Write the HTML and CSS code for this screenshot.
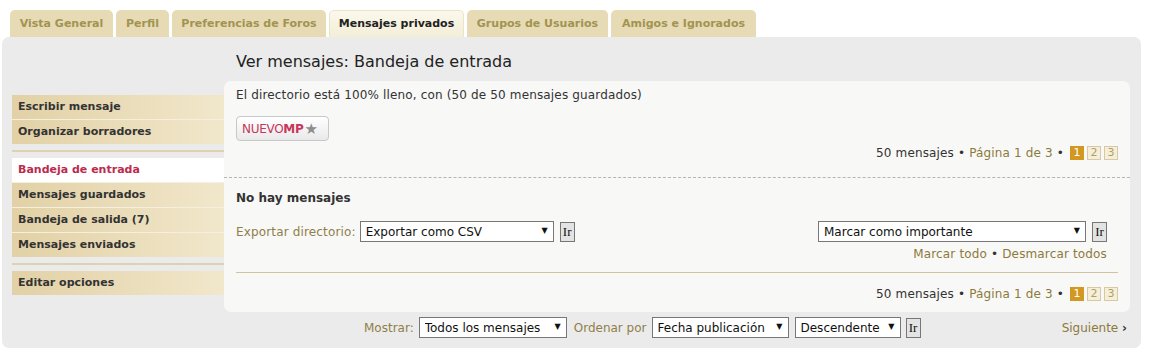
FILE: index.html
```html
<!DOCTYPE html>
<html>
<head lang="es">
    <meta charset="UTF-8">
    <title>Panel de Control de Usuario - Mensajes privados</title>
    <link rel="stylesheet" href="styles.css">
</head>
<body>
    <ul class="tabs">
        <li><a href="#">Vista General</a></li>
        <li><a href="#">Perfil</a></li>
        <li><a href="#">Preferencias de Foros</a></li>
        <li class="active"><a href="#">Mensajes privados</a></li>
        <li><a href="#">Grupos de Usuarios</a></li>
        <li><a href="#">Amigos e Ignorados</a></li>
    </ul>
    <div class="panel">
        <div class="menu">
            <ul>
                <li><a href="#">Escribir mensaje</a></li>
                <li><a href="#">Organizar borradores</a></li>
            </ul>
            <hr>
            <ul>
                <li class="current"><a href="#">Bandeja de entrada</a></li>
                <li><a href="#">Mensajes guardados</a></li>
                <li><a href="#">Bandeja de salida (7)</a></li>
                <li><a href="#">Mensajes enviados</a></li>
            </ul>
            <hr>
            <ul>
                <li><a href="#">Editar opciones</a></li>
            </ul>
        </div>
        <div class="main">
            <h2>Ver mensajes: Bandeja de entrada</h2>
            <div class="inner">
                <p class="full">El directorio está 100% lleno, con (50 de 50 mensajes guardados)</p>
                <div class="newpm"><a href="#" class="btn-pm">NUEVO<b>MP</b><span class="star">&#9733;</span></a></div>
                <div class="pagination">50 mensajes &bull; <a href="#">Página <strong>1</strong> de <strong>3</strong></a> &bull; <span class="pages"><span class="cur">1</span><a href="#">2</a><a href="#">3</a></span></div>
                <hr class="dashed">
                <p class="empty">No hay mensajes</p>
                <div class="actions">
                    <div class="export">
                        <label>Exportar directorio:</label>
                        <span class="sel w-export"><select><option>Exportar como CSV</option></select></span>
                        <button class="go">Ir</button>
                    </div>
                    <div class="mark">
                        <span class="sel w-mark"><select><option>Marcar como importante</option></select></span>
                        <button class="go">Ir</button>
                    </div>
                </div>
                <div class="markall"><a href="#">Marcar todo</a> &bull; <a href="#">Desmarcar todos</a></div>
                <hr class="solid">
                <div class="pagination">50 mensajes &bull; <a href="#">Página <strong>1</strong> de <strong>3</strong></a> &bull; <span class="pages"><span class="cur">1</span><a href="#">2</a><a href="#">3</a></span></div>
            </div>
            <div class="sortbar">
                <div class="sorts">
                    <label>Mostrar:</label>
                    <span class="sel w-show"><select><option>Todos los mensajes</option></select></span>
                    <label>Ordenar por</label>
                    <span class="sel w-order"><select><option>Fecha publicación</option></select></span>
                    <span class="sel w-dir"><select><option>Descendente</option></select></span>
                    <button class="go">Ir</button>
                </div>
                <a href="#" class="next">Siguiente <span class="arr">&rsaquo;</span></a>
            </div>
        </div>
    </div>
</body>
</html>
```

FILE: styles.css
```css
*{
    margin: 0;
    padding: 0;
    box-sizing: border-box;
}
ul,li{
    list-style: none;
}
a{
    text-decoration: none;
}
body{
    font-family: "DejaVu Sans", Verdana, sans-serif;
    font-size: 12px;
    color: #333;
    background: #fff;
    width: 1152px;
    height: 348px;
    overflow: hidden;
}
/* pestañas */
.tabs{
    display: flex;
    gap: 3px;
    padding: 10px 0 0 10px;
    height: 37px;
}
.tabs li{
    background: #e6dbb4;
    border-radius: 5px 5px 0 0;
    height: 27px;
}
.tabs li a{
    display: block;
    text-align: center;
    line-height: 28px;
    font-size: 11px;
    font-weight: bold;
    color: #a39352;
}
.tabs li:nth-child(1){ width: 103px; }
.tabs li:nth-child(2){ width: 53px; }
.tabs li:nth-child(3){ width: 154px; }
.tabs li:nth-child(4){ width: 135px; }
.tabs li:nth-child(5){ width: 141px; }
.tabs li:nth-child(6){ width: 145px; }
.tabs li.active{
    background: linear-gradient(#fbf8ec, #f3eed8);
    border: 1px solid #ece4c6;
    border-bottom: 0;
}
.tabs li.active a{
    color: #222;
    line-height: 26px;
}
/* panel */
.panel{
    display: flex;
    margin: 0 11px 0 2px;
    height: 311px;
    background: #ebebeb;
    border-radius: 7px;
    padding: 0 11px 0 10px;
}
.menu{
    width: 212px;
    padding-top: 58px;
}
.menu li{
    height: 25px;
    border-bottom: 1px solid #f4efe1;
    background: linear-gradient(to right, #e2d1a6, #f1e7cb);
}
.menu li:last-child{
    border-bottom: 0;
    height: 24px;
}
.menu li a{
    display: block;
    padding-left: 6px;
    line-height: 24px;
    font-weight: bold;
    font-size: 11px;
    color: #333;
}
.menu li.current{
    background: #fff;
}
.menu li.current a{
    color: #bc2a4d;
}
.menu hr{
    border: 0;
    border-top: 2px solid #ddd2b2;
    margin: 6px 0 6px;
}
.main{
    flex: 1;
    display: flex;
    flex-direction: column;
}
.main h2{
    font-weight: normal;
    font-size: 16px;
    color: #222;
    padding-left: 12px;
    height: 44px;
    line-height: 50px;
}
.inner{
    background: #f8f8f7;
    border-radius: 7px;
    padding: 7px 12px 0;
    height: 231px;
    letter-spacing: 0.15px;
}
.full{
    line-height: 14px;
    color: #333;
}
.newpm{
    margin-top: 14px;
    height: 25px;
}
.btn-pm{
    display: inline-flex;
    align-items: center;
    height: 25px;
    width: 93px;
    padding-left: 5px;
    border: 1px solid #c8c8c8;
    border-radius: 4px;
    background: linear-gradient(#ffffff, #e9e9e9);
    color: #c6375b;
    font-size: 12px;
    letter-spacing: -0.3px;
}
.btn-pm b{
    font-weight: bold;
}
.btn-pm .star{
    color: #8d8d8d;
    font-size: 15px;
    margin-left: 1px;
}
.pagination{
    display: flex;
    justify-content: flex-end;
    align-items: center;
    height: 14px;
    margin-top: 5px;
    color: #333;
    white-space: pre;
}
.pagination a{
    color: #8c7a3c;
}
.pagination a strong{
    font-weight: normal;
}
.pages{
    display: inline-flex;
    gap: 3px;
    margin-left: 2px;
    letter-spacing: 0;
}
.pages span, .pages a{
    width: 14px;
    height: 14px;
    line-height: 12px;
    text-align: center;
    font-size: 11px;
    border: 1px solid #d6c9a4;
    background: #f5efd9;
    color: #b29e63;
}
.pages .cur{
    background: #d29821;
    border-color: #d29821;
    color: #fff;
}
hr.dashed{
    border: 0;
    border-top: 1px dashed #b5b5b5;
    margin: 17px -12px 0;
}
.empty{
    font-weight: bold;
    margin-top: 13px;
    line-height: 14px;
    letter-spacing: 0;
}
.actions{
    display: flex;
    justify-content: space-between;
    align-items: center;
    margin-top: 16px;
    padding-right: 11px;
    height: 21px;
}
.actions label, .sorts label{
    color: #8f7f4a;
}
.export, .mark, .sorts{
    display: flex;
    align-items: center;
}
.sel{
    position: relative;
    display: inline-block;
    height: 21px;
}
.sel select{
    appearance: none;
    -webkit-appearance: none;
    width: 100%;
    height: 21px;
    border: 1px solid #777;
    background: #fff;
    font-family: "DejaVu Sans", Verdana, sans-serif;
    font-size: 12px;
    color: #111;
    padding: 0 18px 0 5px;
    border-radius: 0;
}
.sel::after{
    content: "\25BC";
    position: absolute;
    right: 6px;
    top: 5px;
    font-size: 8px;
    color: #111;
    pointer-events: none;
}
.w-export{ width: 194px; margin-left: 4px; }
.w-mark{ width: 268px; }
.w-show{ width: 148px; margin: 0 7px 0 5px; }
.w-order{ width: 137px; margin: 0 6px 0 5px; }
.w-dir{ width: 106px; }
.go{
    width: 15px;
    height: 20px;
    margin-left: 6px;
    border: 1px solid #777;
    background: #e3e3e3;
    font-family: "Liberation Serif", serif;
    font-size: 13px;
    color: #111;
    text-align: center;
}
.markall{
    text-align: right;
    padding-right: 11px;
    margin-top: 5px;
    line-height: 15px;
}
.markall a{
    color: #8c7a3c;
}
hr.solid{
    border: 0;
    border-top: 1px solid #cfc3a1;
    margin: 10px 0 0;
}
.inner .pagination:last-child{
    margin-top: 14px;
}
.sortbar{
    display: flex;
    align-items: center;
    height: 31px;
}
.sorts{
    margin-left: 140px;
}
.sorts .go{
    margin-left: 5px;
}
.next{
    margin-left: auto;
    margin-right: 3px;
    color: #8c7a3c;
}
.next .arr{
    color: #333;
    font-weight: bold;
}
```
